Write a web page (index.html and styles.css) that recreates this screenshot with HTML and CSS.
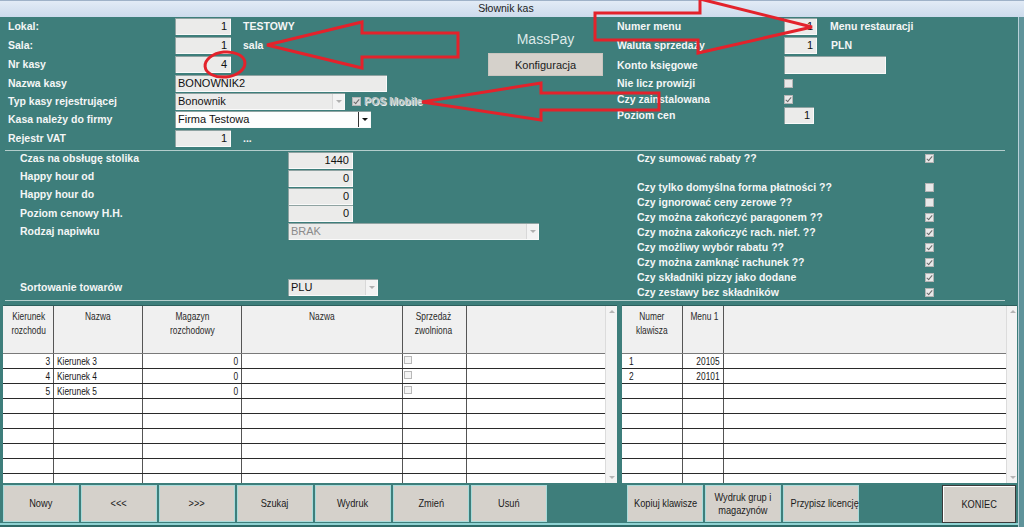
FILE: index.html
```html
<!DOCTYPE html>
<html lang="pl">
<head>
<meta charset="utf-8">
<title>Słownik kas</title>
<link rel="stylesheet" href="styles.css">
</head>
<body>
<div class="titlebar">Słownik kas</div>
<div class="app">
  <div class="win">
    <div class="top">
      <div class="tl">
        <div class="row h19"><span class="lbl w167">Lokal:</span><span class="inp w56">1</span><span class="aside">TESTOWY</span></div>
        <div class="row h19"><span class="lbl w167">Sala:</span><span class="inp w56">1</span><span class="aside">sala</span></div>
        <div class="row h19"><span class="lbl w167">Nr kasy</span><span class="inp w56">4</span></div>
        <div class="row h18"><span class="lbl w167">Nazwa kasy</span><span class="inp w212 left">BONOWNIK2</span></div>
        <div class="row h18"><span class="lbl w167">Typ kasy rejestrującej</span><span class="sel w170 dis"><span class="sv">Bonownik</span><span class="arr"></span></span><span class="cb on dim posbox"></span><span class="posm">POS Mobile</span></div>
        <div class="row h19"><span class="lbl w167">Kasa należy do firmy</span><span class="sel w196 white"><span class="sv">Firma Testowa</span><span class="arr"></span></span></div>
        <div class="row h19"><span class="lbl w167">Rejestr VAT</span><span class="inp w56">1</span><span class="aside">...</span></div>
      </div>
      <div class="masspay">
        <div class="mp-title">MassPay</div>
        <button class="btn konf">Konfiguracja</button>
      </div>
      <div class="tr-col">
        <div class="row h19"><span class="lbl w167">Numer menu</span><span class="inp w33">1</span><span class="aside a13">Menu restauracji</span></div>
        <div class="row h19"><span class="lbl w167">Waluta sprzedaży</span><span class="inp w33">1</span><span class="aside a14">PLN</span></div>
        <div class="row h19"><span class="lbl w167 lo">Konto księgowe</span><span class="inp w102 h18"></span></div>
        <div class="row h16 mid-al"><span class="lbl w167">Nie licz prowizji</span><span class="cb"></span></div>
        <div class="row h16 mid-al"><span class="lbl w167">Czy zainstalowana</span><span class="cb on"></span></div>
        <div class="row h18"><span class="lbl w167">Poziom cen</span><span class="inp w30">1</span></div>
      </div>
    </div>
    <div class="sep"></div>
    <div class="mid">
      <div class="ml">
        <div class="row h18"><span class="lbl w268 hi">Czas na obsługę stolika</span><span class="inp w65">1440</span></div>
        <div class="row h18"><span class="lbl w268 hi">Happy hour od</span><span class="inp w65">0</span></div>
        <div class="row h17"><span class="lbl w268 hi">Happy hour do</span><span class="inp w65">0</span></div>
        <div class="row h18"><span class="lbl w268">Poziom cenowy H.H.</span><span class="inp w65">0</span></div>
        <div class="row h18"><span class="lbl w268">Rodzaj napiwku</span><span class="sel w251 dis"><span class="sv gray">BRAK</span><span class="arr"></span></span></div>
        <div class="vgap38"></div>
        <div class="row h18"><span class="lbl w268">Sortowanie towarów</span><span class="sel w90 dis"><span class="sv">PLU</span><span class="arr"></span></span></div>
      </div>
      <div class="mr">
        <div class="crow"><span class="lbl w288">Czy sumować rabaty ??</span><span class="cb on"></span></div>
        <div class="vgap14"></div>
        <div class="crow"><span class="lbl w288">Czy tylko domyślna forma płatności ??</span><span class="cb"></span></div>
        <div class="crow"><span class="lbl w288">Czy ignorować ceny zerowe ??</span><span class="cb"></span></div>
        <div class="crow"><span class="lbl w288">Czy można zakończyć paragonem ??</span><span class="cb on"></span></div>
        <div class="crow"><span class="lbl w288">Czy można zakończyć rach. nief. ??</span><span class="cb on"></span></div>
        <div class="crow"><span class="lbl w288">Czy możliwy wybór rabatu ??</span><span class="cb on"></span></div>
        <div class="crow"><span class="lbl w288">Czy można zamknąć rachunek ??</span><span class="cb on"></span></div>
        <div class="crow"><span class="lbl w288">Czy składniki pizzy jako dodane</span><span class="cb on"></span></div>
        <div class="crow"><span class="lbl w288">Czy zestawy bez składników</span><span class="cb on"></span></div>
      </div>
    </div>
    <div class="sep"></div>
    <div class="grids">
      <div class="grid g1">
        <div class="tbl">
          <div class="trw th">
            <div class="c k1"><span class="t">Kierunek<br>rozchodu</span></div>
            <div class="c k2"><span class="t">Nazwa</span></div>
            <div class="c k3"><span class="t">Magazyn<br>rozchodowy</span></div>
            <div class="c k4"><span class="t">Nazwa</span></div>
            <div class="c k5"><span class="t">Sprzedaż<br>zwolniona</span></div>
            <div class="c k6"></div>
          </div>
          <div class="trw"><div class="c k1 r"><span class="t">3</span></div><div class="c k2"><span class="t">Kierunek 3</span></div><div class="c k3 r"><span class="t">0</span></div><div class="c k4"></div><div class="c k5"><span class="gcb"></span></div><div class="c k6"></div></div>
          <div class="trw"><div class="c k1 r"><span class="t">4</span></div><div class="c k2"><span class="t">Kierunek 4</span></div><div class="c k3 r"><span class="t">0</span></div><div class="c k4"></div><div class="c k5"><span class="gcb"></span></div><div class="c k6"></div></div>
          <div class="trw"><div class="c k1 r"><span class="t">5</span></div><div class="c k2"><span class="t">Kierunek 5</span></div><div class="c k3 r"><span class="t">0</span></div><div class="c k4"></div><div class="c k5"><span class="gcb"></span></div><div class="c k6"></div></div>
          <div class="trw"><div class="c k1"></div><div class="c k2"></div><div class="c k3"></div><div class="c k4"></div><div class="c k5"></div><div class="c k6"></div></div>
          <div class="trw"><div class="c k1"></div><div class="c k2"></div><div class="c k3"></div><div class="c k4"></div><div class="c k5"></div><div class="c k6"></div></div>
          <div class="trw"><div class="c k1"></div><div class="c k2"></div><div class="c k3"></div><div class="c k4"></div><div class="c k5"></div><div class="c k6"></div></div>
          <div class="trw"><div class="c k1"></div><div class="c k2"></div><div class="c k3"></div><div class="c k4"></div><div class="c k5"></div><div class="c k6"></div></div>
          <div class="trw"><div class="c k1"></div><div class="c k2"></div><div class="c k3"></div><div class="c k4"></div><div class="c k5"></div><div class="c k6"></div></div>
          <div class="trw"><div class="c k1"></div><div class="c k2"></div><div class="c k3"></div><div class="c k4"></div><div class="c k5"></div><div class="c k6"></div></div>
        </div>
        <div class="sb"><span class="up"></span><span class="dn"></span></div>
      </div>
      <div class="grid g2">
        <div class="tbl">
          <div class="trw th">
            <div class="c n1"><span class="t">Numer<br>klawisza</span></div>
            <div class="c n2"><span class="t">Menu 1</span></div>
            <div class="c n3"></div>
          </div>
          <div class="trw"><div class="c n1 l7"><span class="t">1</span></div><div class="c n2 r"><span class="t">20105</span></div><div class="c n3"></div></div>
          <div class="trw"><div class="c n1 l7"><span class="t">2</span></div><div class="c n2 r"><span class="t">20101</span></div><div class="c n3"></div></div>
          <div class="trw"><div class="c n1"></div><div class="c n2"></div><div class="c n3"></div></div>
          <div class="trw"><div class="c n1"></div><div class="c n2"></div><div class="c n3"></div></div>
          <div class="trw"><div class="c n1"></div><div class="c n2"></div><div class="c n3"></div></div>
          <div class="trw"><div class="c n1"></div><div class="c n2"></div><div class="c n3"></div></div>
          <div class="trw"><div class="c n1"></div><div class="c n2"></div><div class="c n3"></div></div>
          <div class="trw"><div class="c n1"></div><div class="c n2"></div><div class="c n3"></div></div>
          <div class="trw"><div class="c n1"></div><div class="c n2"></div><div class="c n3"></div></div>
        </div>
        <div class="sb"><span class="up"></span><span class="dn"></span></div>
      </div>
    </div>
    <div class="btns">
      <button class="btn b"><span class="bt">Nowy</span></button>
      <button class="btn b"><span class="bt">&lt;&lt;&lt;</span></button>
      <button class="btn b"><span class="bt">&gt;&gt;&gt;</span></button>
      <button class="btn b"><span class="bt">Szukaj</span></button>
      <button class="btn b"><span class="bt">Wydruk</span></button>
      <button class="btn b"><span class="bt">Zmień</span></button>
      <button class="btn b"><span class="bt">Usuń</span></button>
      <div class="sp1"></div>
      <button class="btn b"><span class="bt">Kopiuj klawisze</span></button>
      <button class="btn b"><span class="bt">Wydruk grup i<br>magazynów</span></button>
      <button class="btn b"><span class="bt">Przypisz licencję</span></button>
      <div class="sp2"></div>
      <button class="btn b koniec"><span class="bt">KONIEC</span></button>
    </div>
    <div class="status"></div>
  </div>
  <div class="frame-r"></div>
</div>
<svg class="ann" width="1024" height="527" viewBox="0 0 1024 527">
  <g fill="none" stroke="#e3222b" stroke-width="3" stroke-linejoin="miter">
    <polygon points="267,45 362,22 362,33 458,33 458,57 362,57 362,68"/>
    <polygon points="422,102 541,83 541,93 659,93 659,110 541,110 541,120"/>
    <polygon points="812,27 700,-1 700,13 595,13 595,40 698,40 698,53"/>
    <ellipse cx="225" cy="64.5" rx="20" ry="12.5" transform="rotate(-6 225 64.5)"/>
  </g>
</svg>
</body>
</html>
```

FILE: styles.css
```css
* { box-sizing: border-box; margin: 0; padding: 0; }
html, body { width: 1024px; height: 527px; overflow: hidden; }
body {
  background: #3e7e7b;
  font-family: "Liberation Sans", Arial, sans-serif;
  color: #f4f6f6;
  position: relative;
}

.titlebar {
  height: 17px;
  background: linear-gradient(#e2ebf6, #cddbec);
  border-top: 1px solid #9fb2c8;
  color: #1c1c1c;
  font-size: 10.5px;
  line-height: 15px;
  text-align: center;
  padding-right: 12px;
}

.app { display: flex; height: 510px; }
.win { width: 1018px; display: flex; flex-direction: column; }
.frame-r { width: 6px; background: #5f939a; border-left: 1px solid #b8d0d8; }

.row { display: flex; align-items: flex-start; }
.h16 { height: 16px; }
.h17 { height: 17px; }
.h18 { height: 18px; }
.h19 { height: 19px; }
.mid-al { align-items: center; }

.lbl {
  font-weight: bold;
  font-size: 10.5px;
  line-height: 17px;
  color: #f4f6f6;
  white-space: nowrap;
  flex: none;
}
.lbl.hi { line-height: 13px; }
.lbl.lo { line-height: 19px; }
.w167 { width: 167px; }
.w268 { width: 268px; }
.w288 { width: 288px; }

.inp {
  flex: none;
  height: 17px;
  background: #ebebea;
  color: #111;
  font-size: 11px;
  line-height: 17px;
  text-align: right;
  padding-right: 4px;
  box-shadow: inset 1px 1px 0 #8fa3a2, inset -1px -1px 0 #fafafa;
}
.inp.left { text-align: left; padding-left: 3px; }
.inp.h18 { height: 18px; }
.w30 { width: 30px; }
.w33 { width: 33px; }
.w56 { width: 56px; }
.w65 { width: 65px; }
.w102 { width: 102px; }
.w212 { width: 212px; }

.aside {
  font-weight: bold;
  font-size: 10.5px;
  line-height: 17px;
  margin-left: 12px;
  white-space: nowrap;
}
.aside.a13 { margin-left: 13px; }
.aside.a14 { margin-left: 14px; }

.sel {
  flex: none;
  display: flex;
  height: 17px;
  background: #ebebea;
  color: #111;
  font-size: 11px;
  line-height: 17px;
  box-shadow: inset 1px 1px 0 #8fa3a2, inset -1px -1px 0 #fafafa;
}
.sel.white { background: #fdfdfd; }
.sel .sv { flex: 1; padding-left: 3px; white-space: nowrap; overflow: hidden; }
.sel .sv.gray { color: #8a8a8a; }
.sel .arr {
  width: 12px;
  margin: 1px 1px 1px 0;
  background: #f3f3f3;
  border-left: 1px solid #d8d8d8;
  position: relative;
}
.sel .arr::after {
  content: "";
  position: absolute;
  left: 3px;
  top: 6px;
  border-left: 3px solid transparent;
  border-right: 3px solid transparent;
  border-top: 3px solid #b0b0b0;
}
.sel.white .arr { background: #fff; border-left: 1px solid #333; }
.sel.white .arr::after { border-top-color: #111; }
.w90 { width: 90px; }
.w170 { width: 170px; }
.w196 { width: 196px; }
.w251 { width: 251px; }

.cb {
  flex: none;
  width: 9px;
  height: 9px;
  background: #e9e9e9;
  border: 1px solid #b5b5b5;
  position: relative;
}
.cb.on::after {
  content: "";
  position: absolute;
  left: 2px;
  top: 0px;
  width: 2px;
  height: 5px;
  border-right: 1.5px solid #6a6a6a;
  border-bottom: 1.5px solid #6a6a6a;
  transform: rotate(40deg);
}
.cb.dim { background: #d9d9d9; }
.posbox { margin-left: 7px; margin-top: 4px; }
.posm {
  margin-left: 3px;
  font-weight: bold;
  font-size: 10.5px;
  line-height: 17px;
  color: #b9c4c4;
  text-shadow: 1px 1px 0 #e6eeee;
  white-space: nowrap;
}

/* top section */
.top { height: 133px; display: flex; padding-top: 1px; }
.tl { width: 480px; padding-left: 8px; }
.masspay {
  width: 137px;
  padding-top: 13px;
  padding-left: 8px;
}
.mp-title {
  width: 115px;
  text-align: center;
  font-size: 14px;
  line-height: 16px;
  color: #dde9e8;
}
.btn {
  font-family: "Liberation Sans", Arial, sans-serif;
  background: #d5d1cb;
  color: #1b1b1b;
  border: 1px solid #a9dcdb;
  cursor: default;
}
.konf {
  margin-top: 6px;
  width: 115px;
  height: 23px;
  font-size: 11px;
  border: 1px solid #c9c5bf;
}
.tr-col { flex: 1; }

.sep { height: 1px; margin: 0 13px 0 5px; background: #b3cdcc; }

/* middle section */
.mid { height: 149px; display: flex; }
.ml { width: 637px; padding-left: 20px; padding-top: 1px; }
.mr { flex: 1; }
.crow { height: 15px; display: flex; align-items: center; }
.crow .lbl { line-height: 15px; }
.vgap38 { height: 38px; }
.vgap14 { height: 14px; }

/* grids */
.grids { height: 178px; margin-top: 4px; display: flex; padding-left: 3px; gap: 5px; }
.grid {
  display: flex;
  background: #fff;
  height: 178px;
  overflow: hidden;
  border-top: 1px solid #2d5f5d;
}
.g1 { width: 614px; }
.g2 { width: 395px; }
.tbl { flex: 1; overflow: hidden; }
.trw {
  display: flex;
  height: 15px;
  border-bottom: 1px solid #2a2a2a;
  font-size: 11px;
  line-height: 14px;
  color: #161616;
}
.trw.th {
  height: 48px;
  background: #f0f0f0;
  border-bottom: 1px solid #7a7a7a;
  color: #2a2a2a;
}
.th .c { text-align: center; padding-top: 3px; line-height: 14px; }
.c { flex: none; border-right: 1px solid #555; padding: 0 3px; white-space: nowrap; overflow: hidden; }
.c.r { text-align: right; }
.c.l7 { padding-left: 7px; }
.t { display: inline-block; transform: scaleX(0.76); transform-origin: left center; }
.c.r .t { transform-origin: right center; }
.th .t { transform-origin: center center; }
.k1 { width: 51px; }
.k2 { width: 89px; }
.k3 { width: 99px; }
.k4 { width: 161px; }
.k5 { width: 64px; padding-left: 1px; }
.k6 { flex: 1; border-right: none; }
.n1 { width: 61px; }
.n2 { width: 41px; }
.n3 { flex: 1; border-right: none; }
.gcb {
  display: inline-block;
  width: 8px;
  height: 8px;
  margin-top: 2px;
  border: 1px solid #b8b8b8;
  background: #f4f4f4;
  vertical-align: top;
}

.sb {
  width: 12px;
  flex: none;
  background: #f3f3f3;
  border-left: 1px solid #dcdcdc;
  display: flex;
  flex-direction: column;
  justify-content: space-between;
  padding: 4px 0 4px 3px;
}
.g2 .sb { width: 11px; }
.sb .up, .sb .dn {
  width: 0;
  height: 0;
  border-left: 3px solid transparent;
  border-right: 3px solid transparent;
}
.sb .up { border-bottom: 3px solid #b5b5b5; }
.sb .dn { border-top: 3px solid #b5b5b5; }

/* buttons */
.btns { height: 37px; margin-top: 2px; display: flex; gap: 2px; padding-left: 3px; }
.b { width: 76px; height: 37px; font-size: 11px; line-height: 13px; flex: none; white-space: nowrap; }
.bt { display: inline-block; transform: scaleX(0.84); transform-origin: center center; }
.sp1 { width: 76px; flex: none; }
.sp2 { width: 79px; flex: none; }
.koniec { width: 74px; height: 38px; border: 1px solid #3a3a3a; box-shadow: inset 1px 1px 0 #fff; }

.status { height: 4px; margin-top: 1px; border-top: 2px solid #8fd3d3; background: #2f6a67; }

.ann { position: absolute; left: 0; top: 0; pointer-events: none; }
```
